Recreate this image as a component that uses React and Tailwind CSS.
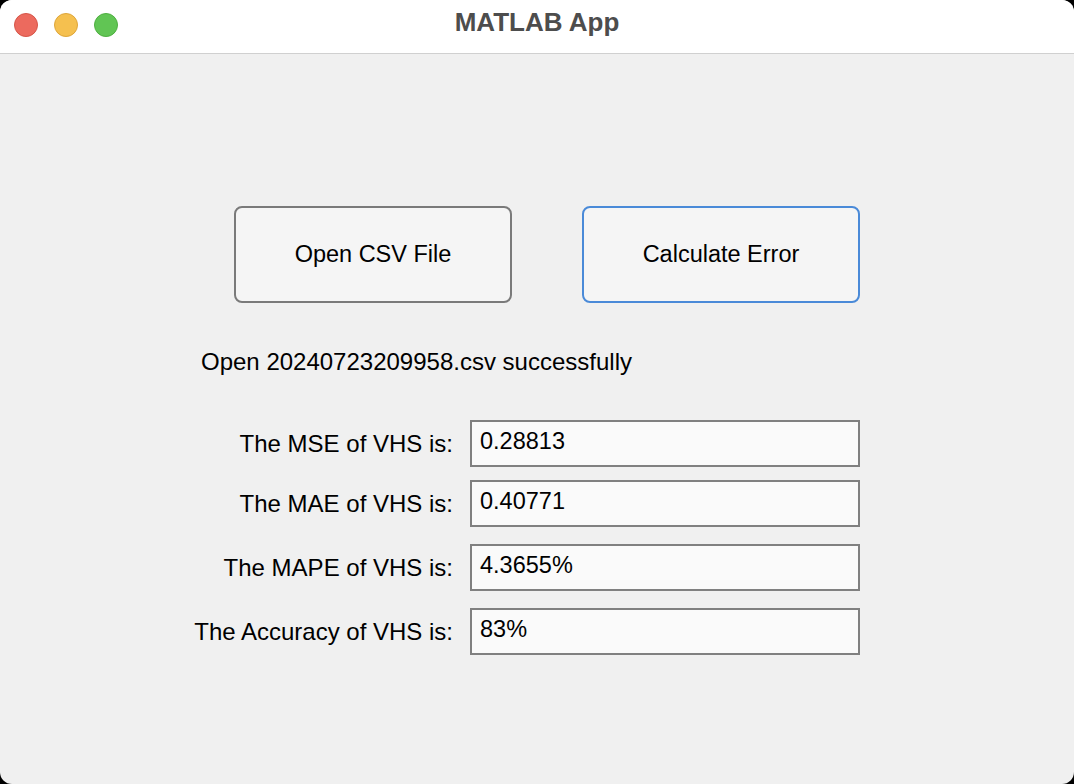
import React from "react";

const font = { fontFamily: '"Liberation Sans", Arial, Helvetica, sans-serif' };

function Row({ label, value, mt }) {
  return (
    <div className={`flex items-center ${mt}`}>
      <div className="w-[287px] text-right pr-[17px] text-[24px] text-black leading-none whitespace-nowrap">{label}</div>
      <div className="w-[390px] h-[47px] border-2 border-[#808080] bg-[#fafafa] flex items-start pt-[8px] pl-[8px] text-[23.5px] text-black leading-none">
        {value}
      </div>
    </div>
  );
}

export default function App() {
  return (
    <div className="w-[1074px] h-[784px] bg-black" style={font}>
      <div className="w-full h-full rounded-[12px] overflow-hidden bg-[#f0f0f0] flex flex-col">
        <div className="h-[54px] bg-white border-b border-[#d0d0d0] relative flex items-center justify-center shrink-0">
          <div className="absolute left-[14px] top-[13px] flex gap-[16px]">
            <div className="w-[24px] h-[24px] rounded-full bg-[#ec6a5e] border border-[#d65548]" />
            <div className="w-[24px] h-[24px] rounded-full bg-[#f5c04f] border border-[#dea63a]" />
            <div className="w-[24px] h-[24px] rounded-full bg-[#61c554] border border-[#4eaf40]" />
          </div>
          <div className="text-[26px] font-bold text-[#4d4d4d] -mt-[9px]">MATLAB App</div>
        </div>
        <div className="flex-1 flex flex-col pl-[183px]">
          <div className="flex gap-[70px] mt-[152px] ml-[51px]">
            <div className="w-[278px] h-[97px] rounded-[8px] border-2 border-[#7a7a7a] bg-[#f5f5f5] flex items-center justify-center text-[23.5px] text-black">
              Open CSV File
            </div>
            <div className="w-[278px] h-[97px] rounded-[8px] border-2 border-[#4a8ad8] bg-[#f5f5f5] flex items-center justify-center text-[23.5px] text-black">
              Calculate Error
            </div>
          </div>
          <div className="mt-[47px] ml-[18px] text-[24px] text-black leading-none whitespace-nowrap">Open 20240723209958.csv successfully</div>
          <Row label="The MSE of VHS is:" value="0.28813" mt="mt-[46px]" />
          <Row label="The MAE of VHS is:" value="0.40771" mt="mt-[13px]" />
          <Row label="The MAPE of VHS is:" value="4.3655%" mt="mt-[17px]" />
          <Row label="The Accuracy of VHS is:" value="83%" mt="mt-[17px]" />
        </div>
      </div>
    </div>
  );
}
